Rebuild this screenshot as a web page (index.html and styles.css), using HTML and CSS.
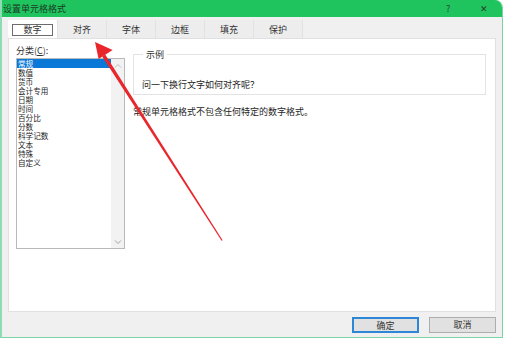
FILE: index.html
```html
<!DOCTYPE html>
<html lang="zh-CN">
<head>
    <meta charset="UTF-8">
    <title>设置单元格格式</title>
    <link rel="stylesheet" href="styles.css">
</head>
<body>
    <div class="window">
        <div class="titlebar">
            <span class="title">设置单元格格式</span>
            <span class="help">?</span>
            <span class="close">✕</span>
        </div>

        <div class="tabs">
            <div class="tab active"><span>数字</span></div>
            <div class="tab">对齐</div>
            <div class="tab">字体</div>
            <div class="tab">边框</div>
            <div class="tab">填充</div>
            <div class="tab">保护</div>
        </div>

        <div class="panel">
            <div class="left">
                <div class="label">分类(<u>C</u>):</div>
                <div class="listbox">
                    <ul class="items">
                        <li class="selected">常规</li>
                        <li>数值</li>
                        <li>货币</li>
                        <li>会计专用</li>
                        <li>日期</li>
                        <li>时间</li>
                        <li>百分比</li>
                        <li>分数</li>
                        <li>科学记数</li>
                        <li>文本</li>
                        <li>特殊</li>
                        <li>自定义</li>
                    </ul>
                    <div class="scrollbar">
                        <svg width="8" height="6" viewBox="0 0 8 6"><path d="M1 4.5 L4 1.5 L7 4.5" fill="none" stroke="#bdbdbd" stroke-width="1"/></svg>
                        <svg width="8" height="6" viewBox="0 0 8 6"><path d="M1 1.5 L4 4.5 L7 1.5" fill="none" stroke="#a0a0a0" stroke-width="1"/></svg>
                    </div>
                </div>
            </div>

            <div class="right">
                <fieldset class="sample">
                    <legend>示例</legend>
                    <div class="sample-text">问一下换行文字如何对齐呢？</div>
                </fieldset>
                <div class="desc">常规单元格格式不包含任何特定的数字格式。</div>
            </div>
        </div>

        <div class="footer">
            <button class="btn primary">确定</button>
            <button class="btn">取消</button>
        </div>
    </div>

    <!-- 红色箭头标注 -->
    <svg class="arrow" width="510" height="341" viewBox="0 0 510 341">
        <polygon points="102.2,56.5 105.2,54.5 222.6,240.3 221.6,240.8" fill="#e8262c"/>
        <polygon points="95,42 98.6,59 112.6,50" fill="#e8262c"/>
    </svg>
</body>
</html>
```

FILE: styles.css
```css
/* 对话框整体 */
body {
    margin: 0;
    background: #ffffff;
    font-family: "Noto Sans CJK SC", "Noto Sans", sans-serif;
    color: #1e1e1e;
}

.window {
    width: 503px;
    height: 338px;
    box-sizing: border-box;
    border: 1px solid #7ad4a6;
    border-left: 2px solid #8fdbb4;
    border-top: none;
    border-top-right-radius: 8px;
    overflow: hidden;
    background: #f0f0f0;
    display: flex;
    flex-direction: column;
    position: relative;
}

.titlebar {
    height: 17px;
    background: #20c45e;
    display: flex;
    align-items: center;
    font-size: 9px;
    padding-left: 3px;
    margin-left: -2px;
}

.title {
    flex: 1;
    color: #1b3a25;
}

.help {
    width: 34px;
    color: #24422e;
    font-size: 9px;
}

.close {
    width: 22px;
    color: #24422e;
    font-size: 9px;
}

/* 选项卡 */
.tabs {
    display: flex;
    margin: 3px 0 0 6px;
    height: 18px;
}

.tab {
    width: 48px;
    font-size: 9px;
    display: flex;
    align-items: center;
    justify-content: center;
    border-right: 1px solid #e2e2e2;
    background: #ededed;
    color: #333;
}

.tab.active {
    background: #ffffff;
    width: 49px;
}

.tab.active span {
    border: 1px solid #6c6c6c;
    padding: 0 10px;
    line-height: 10px;
    margin-top: 2px;
}

/* 内容面板 */
.panel {
    height: 274px;
    box-sizing: border-box;
    margin: 0 6px;
    background: #ffffff;
    border: 1px solid #e0e0e0;
    display: flex;
    padding: 7px 9px 0 7px;
    gap: 8px;
}

.left {
    width: 109px;
}

.label {
    font-size: 9px;
    line-height: 10px;
    color: #333;
}

.label u {
    text-decoration: underline;
}

.listbox {
    margin-top: 2px;
    height: 191px;
    box-sizing: border-box;
    border: 1px solid #b9b9b9;
    display: flex;
}

.items {
    list-style: none;
    margin: 0;
    padding: 0;
    flex: 1;
}

.items li {
    font-size: 7.6px;
    line-height: 9px;
    padding-left: 1px;
    height: 9px;
    color: #1e1e1e;
}

.items li.selected {
    background: #0a78d7;
    color: #ffffff;
}

.scrollbar {
    width: 13px;
    background: #f2f2f2;
    display: flex;
    flex-direction: column;
    justify-content: space-between;
    align-items: center;
    padding: 4px 0 3px;
}

.right {
    flex: 1;
    padding-top: 2px;
}

.sample {
    margin: 0;
    padding: 19px 8px 4px;
    border: 1px solid #e3e3e3;
}

.sample legend {
    font-size: 9px;
    padding: 0 3px;
    margin-left: 1px;
    color: #333;
}

.sample-text {
    font-size: 9px;
    line-height: 10px;
}

.desc {
    margin-top: 12px;
    font-size: 9px;
    line-height: 10px;
}

/* 底部按钮 */
.footer {
    flex: 1;
    display: flex;
    justify-content: flex-end;
    align-items: center;
    gap: 10px;
    padding-right: 6px;
}

.btn {
    width: 67px;
    height: 16px;
    font-family: inherit;
    font-size: 9px;
    background: #e1e1e1;
    border: 1px solid #adadad;
    color: #333;
    padding: 0;
}

.btn.primary {
    border: 2px solid #2e86d6;
}

.arrow {
    position: absolute;
    left: 0;
    top: 0;
    pointer-events: none;
}
```
